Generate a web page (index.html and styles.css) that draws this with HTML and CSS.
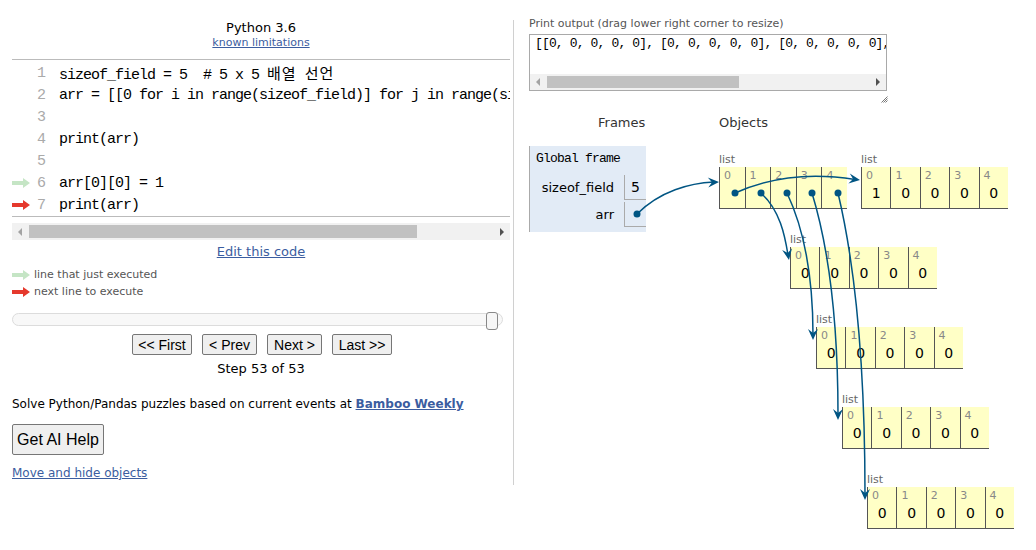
FILE: index.html
```html
<!DOCTYPE html>
<html>
<head>
<meta charset="utf-8">
<link rel="stylesheet" href="styles.css">
</head>
<body>
<div class="page">
  <div class="left">
    <div class="lang">Python 3.6</div>
    <div class="limits"><a href="#">known limitations</a></div>
    <div class="code">
      <div class="line"><span class="gut"></span><span class="num">1</span><span class="src">sizeof_field = 5  # 5 x 5 <span class="ko">배열</span> <span class="ko">선언</span></span></div>
      <div class="line"><span class="gut"></span><span class="num">2</span><span class="src">arr = [[0 for i in range(sizeof_field)] for j in range(sizeof_field)]</span></div>
      <div class="line"><span class="gut"></span><span class="num">3</span><span class="src"></span></div>
      <div class="line"><span class="gut"></span><span class="num">4</span><span class="src">print(arr)</span></div>
      <div class="line"><span class="gut"></span><span class="num">5</span><span class="src"></span></div>
      <div class="line"><span class="gut"><svg class="arw" width="18" height="10" viewBox="0 0 18 10"><path class="green" d="M0,3 H11 V0 L18,5 L11,10 V7 H0 Z"/></svg></span><span class="num">6</span><span class="src">arr[0][0] = 1</span></div>
      <div class="line"><span class="gut"><svg class="arw" width="18" height="10" viewBox="0 0 18 10"><path class="red" d="M0,3 H11 V0 L18,5 L11,10 V7 H0 Z"/></svg></span><span class="num">7</span><span class="src">print(arr)</span></div>
    </div>
    <div class="hscroll">
      <span class="sarrow"><svg width="5" height="8" viewBox="0 0 5 8"><path d="M4,0 L0,4 L4,8 Z" fill="#a3a3a3"/></svg></span>
      <span class="sthumb code-thumb"></span>
      <span class="strack"></span>
      <span class="sarrow"><svg width="5" height="8" viewBox="0 0 5 8"><path d="M1,0 L5,4 L1,8 Z" fill="#505050"/></svg></span>
    </div>
    <div class="edit"><a href="#">Edit this code</a></div>
    <div class="legend">
      <div class="leg"><svg width="18" height="10" viewBox="0 0 18 10"><path class="green" d="M0,3 H11 V0 L18,5 L11,10 V7 H0 Z"/></svg><span>line that just executed</span></div>
      <div class="leg"><svg width="18" height="10" viewBox="0 0 18 10"><path class="red" d="M0,3 H11 V0 L18,5 L11,10 V7 H0 Z"/></svg><span>next line to execute</span></div>
    </div>
    <div class="slider"><div class="track"><div class="knob"></div></div></div>
    <div class="buttons">
      <button class="b60">&lt;&lt; First</button>
      <button class="b55">&lt; Prev</button>
      <button class="b55">Next &gt;</button>
      <button class="b60">Last &gt;&gt;</button>
    </div>
    <div class="step">Step 53 of 53</div>
    <div class="solve">Solve Python/Pandas puzzles based on current events at <a href="#">Bamboo Weekly</a></div>
    <button class="ai">Get AI Help</button>
    <a class="movehide" href="#">Move and hide objects</a>
  </div>

  <div class="right">
    <div class="outlabel">Print output (drag lower right corner to resize)</div>
    <div class="outbox">
      <div class="outtext">[[0, 0, 0, 0, 0], [0, 0, 0, 0, 0], [0, 0, 0, 0, 0], [0, 0, 0, 0, 0], [0, 0, 0, 0, 0]]</div>
      <div class="outscroll">
        <span class="sarrow"><svg width="5" height="8" viewBox="0 0 5 8"><path d="M4,0 L0,4 L4,8 Z" fill="#a3a3a3"/></svg></span>
        <span class="sthumb out-thumb"></span>
        <span class="strack"></span>
        <span class="sarrow"><svg width="5" height="8" viewBox="0 0 5 8"><path d="M1,0 L5,4 L1,8 Z" fill="#505050"/></svg></span>
      </div>
    </div>
    <div class="grip"><svg width="7" height="7" viewBox="0 0 7 7"><path d="M6.5,0.5 L0.5,6.5 M6.5,2.5 L2.5,6.5 M6.5,4.5 L4.5,6.5" stroke="#777" stroke-width="1"/></svg></div>
    <div class="heads"><span></span><span>Frames</span><span>Objects</span></div>
    <div class="canvas">
      <div class="frame">
        <div class="fname">Global frame</div>
        <div class="vars">
          <div class="vname">sizeof_field</div><div class="vval">5</div>
          <div class="vname">arr</div><div class="vval"></div>
        </div>
      </div>

      <div class="obj narrow pos-a">
        <div class="lbl">list</div>
        <div class="cells">
          <div class="cell"><div class="idx">0</div></div>
          <div class="cell"><div class="idx">1</div></div>
          <div class="cell"><div class="idx">2</div></div>
          <div class="cell"><div class="idx">3</div></div>
          <div class="cell"><div class="idx">4</div></div>
        </div>
      </div>
      <div class="obj pos-b">
        <div class="lbl">list</div>
        <div class="cells">
          <div class="cell"><div class="idx">0</div><div class="val">1</div></div>
          <div class="cell"><div class="idx">1</div><div class="val">0</div></div>
          <div class="cell"><div class="idx">2</div><div class="val">0</div></div>
          <div class="cell"><div class="idx">3</div><div class="val">0</div></div>
          <div class="cell"><div class="idx">4</div><div class="val">0</div></div>
        </div>
      </div>
      <div class="obj pos-c">
        <div class="lbl">list</div>
        <div class="cells">
          <div class="cell"><div class="idx">0</div><div class="val">0</div></div>
          <div class="cell"><div class="idx">1</div><div class="val">0</div></div>
          <div class="cell"><div class="idx">2</div><div class="val">0</div></div>
          <div class="cell"><div class="idx">3</div><div class="val">0</div></div>
          <div class="cell"><div class="idx">4</div><div class="val">0</div></div>
        </div>
      </div>
      <div class="obj pos-d">
        <div class="lbl">list</div>
        <div class="cells">
          <div class="cell"><div class="idx">0</div><div class="val">0</div></div>
          <div class="cell"><div class="idx">1</div><div class="val">0</div></div>
          <div class="cell"><div class="idx">2</div><div class="val">0</div></div>
          <div class="cell"><div class="idx">3</div><div class="val">0</div></div>
          <div class="cell"><div class="idx">4</div><div class="val">0</div></div>
        </div>
      </div>
      <div class="obj pos-e">
        <div class="lbl">list</div>
        <div class="cells">
          <div class="cell"><div class="idx">0</div><div class="val">0</div></div>
          <div class="cell"><div class="idx">1</div><div class="val">0</div></div>
          <div class="cell"><div class="idx">2</div><div class="val">0</div></div>
          <div class="cell"><div class="idx">3</div><div class="val">0</div></div>
          <div class="cell"><div class="idx">4</div><div class="val">0</div></div>
        </div>
      </div>
      <div class="obj pos-f">
        <div class="lbl">list</div>
        <div class="cells">
          <div class="cell"><div class="idx">0</div><div class="val">0</div></div>
          <div class="cell"><div class="idx">1</div><div class="val">0</div></div>
          <div class="cell"><div class="idx">2</div><div class="val">0</div></div>
          <div class="cell"><div class="idx">3</div><div class="val">0</div></div>
          <div class="cell"><div class="idx">4</div><div class="val">0</div></div>
        </div>
      </div>

      <svg class="links" width="507" height="410" viewBox="0 0 507 410">
        <g transform="translate(-529 -140)">
          <g class="ln">
            <path d="M637,213 C660,190 690,182 714,181"/>
            <path d="M735,192 C775,174 815,172 855,178.5"/>
            <path d="M761,192 C780,209 785,235 788,254"/>
            <path d="M787,192 C805,230 813,280 813,334"/>
            <path d="M812,192 C830,251 838,328 838,414"/>
            <path d="M838,192 C857,272 865,376 865,494"/>
          </g>
          <g class="hd">
            <path transform="translate(719 181) rotate(-3)" d="M0,0 L-11,-5 L-7,0 L-11,5 Z"/>
            <path transform="translate(860 179) rotate(8)" d="M0,0 L-11,-5 L-7,0 L-11,5 Z"/>
            <path transform="translate(789 259) rotate(80)" d="M0,0 L-11,-5 L-7,0 L-11,5 Z"/>
            <path transform="translate(813 339) rotate(90)" d="M0,0 L-11,-5 L-7,0 L-11,5 Z"/>
            <path transform="translate(838 419) rotate(90)" d="M0,0 L-11,-5 L-7,0 L-11,5 Z"/>
            <path transform="translate(865 499) rotate(90)" d="M0,0 L-11,-5 L-7,0 L-11,5 Z"/>
            <circle cx="637" cy="213" r="3.5"/>
            <circle cx="735" cy="192" r="3.5"/>
            <circle cx="761" cy="192" r="3.5"/>
            <circle cx="787" cy="192" r="3.5"/>
            <circle cx="812" cy="192" r="3.5"/>
            <circle cx="838" cy="192" r="3.5"/>
          </g>
        </g>
      </svg>
    </div>
  </div>
</div>
</body>
</html>
```
FILE: styles.css
```css
* { box-sizing: border-box; }
body {
  margin: 0;
  background: #fff;
  color: #000;
  font-family: "DejaVu Sans", Verdana, sans-serif;
}
a { color: #3b5da0; }

.page { display: flex; align-items: flex-start; }

/* ---------- left column ---------- */
.left {
  margin-left: 12px;
  margin-top: 20px;
  width: 502px;
  padding-right: 3px;
  padding-bottom: 4px;
  border-right: 1px solid #d0d0d0;
  display: flex;
  flex-direction: column;
  align-items: stretch;
}
.lang { text-align: center; font-size: 13px; line-height: 16px; }
.limits { text-align: center; font-size: 11px; line-height: 14px; }

.code {
  margin-top: 9px;
  border-top: 1px solid #bbb;
  border-bottom: 1px solid #bbb;
  padding-top: 2px;
  overflow: hidden;
  font-family: "Liberation Mono", "DejaVu Sans Mono", monospace;
  font-size: 15px;
  letter-spacing: -1px;
}
.line { display: flex; align-items: center; height: 22px; white-space: pre; }
.gut { width: 22px; flex: none; display: flex; align-items: center; }
.num { width: 11px; flex: none; text-align: right; color: #aaa; }
.src { margin-left: 14px; }
.ko { font-family: "Noto Sans CJK KR", sans-serif; letter-spacing: 1px; font-size: 15px; }
.green { fill: #c5e5c5; }
.red { fill: #e5392d; }

.hscroll {
  margin-top: 6px;
  height: 17px;
  background: #f1f1f1;
  display: flex;
  align-items: center;
}
.sarrow { width: 17px; flex: none; display: flex; justify-content: center; align-items: center; }
.sthumb { height: 13px; background: #c1c1c1; flex: none; }
.code-thumb { width: 388px; }
.strack { flex: 1; }

.edit { margin-top: 4px; text-align: center; font-size: 13px; line-height: 16px; }

.legend { margin-top: 6px; font-size: 11px; color: #555; }
.leg { display: flex; align-items: center; height: 17px; gap: 4px; }

.slider { margin-top: 13px; }
.track {
  height: 13px;
  border: 1px solid #dcdcdc;
  border-radius: 7px;
  background: #f8f8f8;
  width: 491px;
  display: flex;
  justify-content: flex-end;
  align-items: flex-start;
}
.knob {
  width: 12px;
  height: 18px;
  margin-top: -2px;
  margin-right: 4px;
  background: #f6f6f6;
  border: 1px solid #888;
  border-radius: 3px;
}

.buttons { margin-top: 8px; display: flex; justify-content: center; gap: 10px; padding-left: 2px; }
button {
  font-family: "Liberation Sans", Arial, sans-serif;
  font-size: 14px;
  height: 21px;
  padding: 0;
  background: #efefef;
  border: 1px solid #767676;
  border-radius: 2px;
  color: #000;
}
.b60 { width: 60px; }
.b55 { width: 55px; }

.step { margin-top: 6px; text-align: center; font-size: 13px; line-height: 16px; }
.solve { margin-top: 19px; font-size: 12px; line-height: 16px; }
.solve a { font-weight: bold; }
.ai { margin-top: 12px; width: 92px; height: 31px; font-size: 16px; align-self: flex-start; }
.movehide { margin-top: 10px; font-size: 12px; line-height: 16px; align-self: flex-start; }

/* ---------- right column ---------- */
.right { padding-left: 15px; padding-top: 17px; flex: 1; }
.outlabel { font-size: 11px; line-height: 14px; color: #555; }
.outbox {
  margin-top: 3px;
  width: 358px;
  height: 57px;
  border: 1px solid #a9a9a9;
  display: flex;
  flex-direction: column;
}
.outtext {
  flex: 1;
  padding: 1px 0 0 5px;
  font-family: "Liberation Mono", "DejaVu Sans Mono", monospace;
  font-size: 13px;
  letter-spacing: -0.85px;
  line-height: 16px;
  white-space: pre;
  overflow: hidden;
}
.outscroll { height: 16px; background: #f1f1f1; display: flex; align-items: center; }
.out-thumb { width: 192px; height: 12px; }
.grip { width: 359px; display: flex; justify-content: flex-end; margin-top: 5px; height: 7px; }

.heads {
  margin-top: 12px;
  display: grid;
  grid-template-columns: 69px 121px auto;
  font-size: 13px;
  line-height: 16px;
  color: #333;
}
.canvas { margin-top: 10px; padding-top: 5px; position: relative; height: 410px; }

.frame {
  width: 117px;
  background: #e2ebf6;
  border-left: 1px solid #aaa;
  padding: 6px 0 5px 0;
}
.fname {
  padding-left: 6px;
  font-family: "Liberation Mono", "DejaVu Sans Mono", monospace;
  font-size: 13px;
  letter-spacing: -0.8px;
  line-height: 14px;
}
.vars { margin-top: 9px; display: grid; grid-template-columns: 94px 22px; row-gap: 2px; }
.vname { text-align: right; padding-right: 10px; font-size: 13px; line-height: 25px; }
.vval {
  height: 25px;
  border-left: 1px solid #aaa;
  border-bottom: 1px solid #aaa;
  padding-left: 6px;
  font-size: 14px;
  line-height: 24px;
}

.obj { position: absolute; }
.pos-a { left: 190px; top: 12px; }
.pos-b { left: 332px; top: 12px; }
.pos-c { left: 261px; top: 92px; }
.pos-d { left: 287px; top: 172px; }
.pos-e { left: 313px; top: 252px; }
.pos-f { left: 338px; top: 332px; }
.lbl { font-size: 11px; line-height: 14px; color: #666; }
.cells { display: flex; }
.cell {
  width: 29.4px;
  height: 42px;
  background: #ffffc6;
  border-left: 1px solid #555;
  border-bottom: 1px solid #555;
  padding: 3px 0 0 4px;
}
.narrow .cell { width: 25.6px; }
.idx { font-size: 11px; line-height: 12px; color: #888; }
.val { margin-top: 3px; margin-left: -4px; text-align: center; font-size: 14px; line-height: 16px; }

.links { position: absolute; left: 0; top: 0; overflow: visible; pointer-events: none; }
.ln path { fill: none; stroke: #005583; stroke-width: 1.5; }
.hd path, .hd circle { fill: #005583; }
```
